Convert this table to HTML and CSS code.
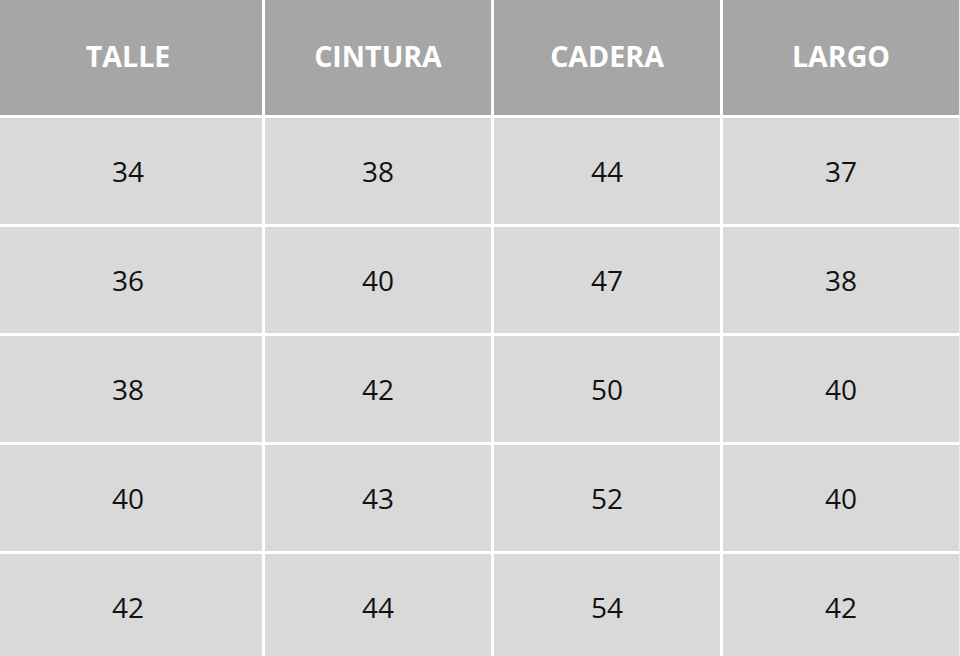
FILE: index.html
```html
<!DOCTYPE html>
<html lang="es">
<head>
<meta charset="utf-8">
<title>Tabla de talles</title>
<link rel="stylesheet" href="styles.css">
</head>
<body>
<div class="sizes">
  <div class="cell head first">TALLE</div>
  <div class="cell head">CINTURA</div>
  <div class="cell head">CADERA</div>
  <div class="cell head">LARGO</div>

  <div class="cell first">34</div><div class="cell">38</div><div class="cell">44</div><div class="cell">37</div>
  <div class="cell first">36</div><div class="cell">40</div><div class="cell">47</div><div class="cell">38</div>
  <div class="cell first">38</div><div class="cell">42</div><div class="cell">50</div><div class="cell">40</div>
  <div class="cell first">40</div><div class="cell">43</div><div class="cell">52</div><div class="cell">40</div>
  <div class="cell first">42</div><div class="cell">44</div><div class="cell">54</div><div class="cell">42</div>
</div>
</body>
</html>
```
FILE: styles.css
```css
html, body {
  margin: 0;
  padding: 0;
  background: #ffffff;
}
body {
  width: 960px;
  height: 656px;
  overflow: hidden;
  font-family: "Open Sans", "Liberation Sans", sans-serif;
}
.sizes {
  display: grid;
  grid-template-columns: 262px 226px 226px 236px;
  grid-template-rows: 115px repeat(5, 106px);
  gap: 3px;
  width: 959px;
  background: #ffffff;
  border-right: 1px solid #ececec;
}
.cell {
  display: flex;
  align-items: center;
  justify-content: center;
  background: #d9d9d9;
  color: #111111;
  font-size: 28px;
  font-weight: 400;
}
.cell.first {
  padding-right: 6px;
}
.cell.head {
  background: #a6a6a6;
  color: #ffffff;
  font-size: 28.6px;
  font-weight: 700;
  padding-bottom: 4px;
}
.cell.head.first {
  padding-right: 6px;
}
```
